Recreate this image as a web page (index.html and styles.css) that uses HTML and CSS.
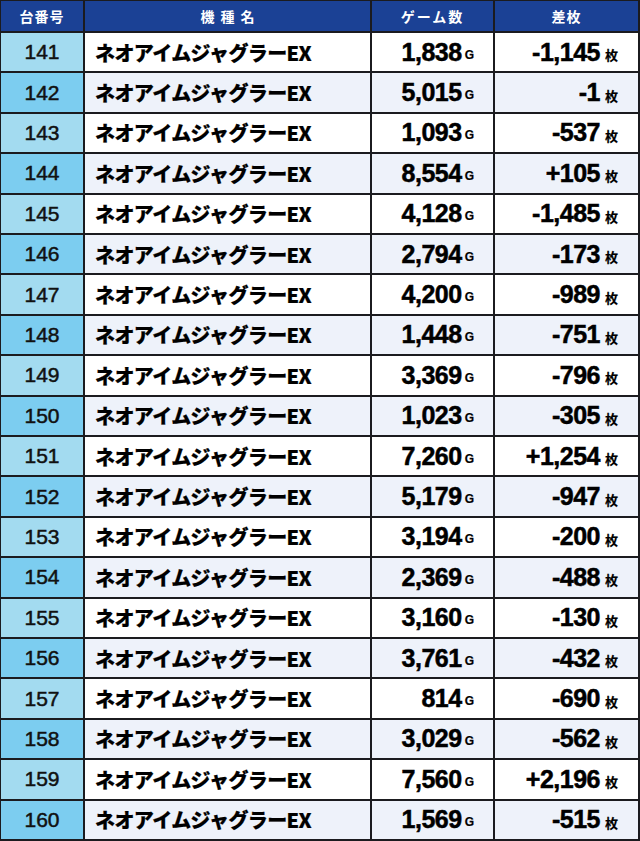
FILE: index.html
```html
<!DOCTYPE html>
<html lang="ja">
<head>
<meta charset="utf-8">
<title>台番号一覧</title>
<link rel="stylesheet" href="styles.css">
</head>
<body>
<div class="table">
  <div class="th">台番号</div>
  <div class="th th-wide">機種名</div>
  <div class="th th-mid">ゲーム数</div>
  <div class="th">差枚</div>

  <div class="no odd">141</div><div class="name odd">ネオアイムジャグラーEX</div><div class="games odd">1,838<span class="u">G</span></div><div class="diff odd">-1,145<span class="m">枚</span></div>
  <div class="no even">142</div><div class="name even">ネオアイムジャグラーEX</div><div class="games even">5,015<span class="u">G</span></div><div class="diff even">-1<span class="m">枚</span></div>
  <div class="no odd">143</div><div class="name odd">ネオアイムジャグラーEX</div><div class="games odd">1,093<span class="u">G</span></div><div class="diff odd">-537<span class="m">枚</span></div>
  <div class="no even">144</div><div class="name even">ネオアイムジャグラーEX</div><div class="games even">8,554<span class="u">G</span></div><div class="diff even">+105<span class="m">枚</span></div>
  <div class="no odd">145</div><div class="name odd">ネオアイムジャグラーEX</div><div class="games odd">4,128<span class="u">G</span></div><div class="diff odd">-1,485<span class="m">枚</span></div>
  <div class="no even">146</div><div class="name even">ネオアイムジャグラーEX</div><div class="games even">2,794<span class="u">G</span></div><div class="diff even">-173<span class="m">枚</span></div>
  <div class="no odd">147</div><div class="name odd">ネオアイムジャグラーEX</div><div class="games odd">4,200<span class="u">G</span></div><div class="diff odd">-989<span class="m">枚</span></div>
  <div class="no even">148</div><div class="name even">ネオアイムジャグラーEX</div><div class="games even">1,448<span class="u">G</span></div><div class="diff even">-751<span class="m">枚</span></div>
  <div class="no odd">149</div><div class="name odd">ネオアイムジャグラーEX</div><div class="games odd">3,369<span class="u">G</span></div><div class="diff odd">-796<span class="m">枚</span></div>
  <div class="no even">150</div><div class="name even">ネオアイムジャグラーEX</div><div class="games even">1,023<span class="u">G</span></div><div class="diff even">-305<span class="m">枚</span></div>
  <div class="no odd">151</div><div class="name odd">ネオアイムジャグラーEX</div><div class="games odd">7,260<span class="u">G</span></div><div class="diff odd">+1,254<span class="m">枚</span></div>
  <div class="no even">152</div><div class="name even">ネオアイムジャグラーEX</div><div class="games even">5,179<span class="u">G</span></div><div class="diff even">-947<span class="m">枚</span></div>
  <div class="no odd">153</div><div class="name odd">ネオアイムジャグラーEX</div><div class="games odd">3,194<span class="u">G</span></div><div class="diff odd">-200<span class="m">枚</span></div>
  <div class="no even">154</div><div class="name even">ネオアイムジャグラーEX</div><div class="games even">2,369<span class="u">G</span></div><div class="diff even">-488<span class="m">枚</span></div>
  <div class="no odd">155</div><div class="name odd">ネオアイムジャグラーEX</div><div class="games odd">3,160<span class="u">G</span></div><div class="diff odd">-130<span class="m">枚</span></div>
  <div class="no even">156</div><div class="name even">ネオアイムジャグラーEX</div><div class="games even">3,761<span class="u">G</span></div><div class="diff even">-432<span class="m">枚</span></div>
  <div class="no odd">157</div><div class="name odd">ネオアイムジャグラーEX</div><div class="games odd">814<span class="u">G</span></div><div class="diff odd">-690<span class="m">枚</span></div>
  <div class="no even">158</div><div class="name even">ネオアイムジャグラーEX</div><div class="games even">3,029<span class="u">G</span></div><div class="diff even">-562<span class="m">枚</span></div>
  <div class="no odd">159</div><div class="name odd">ネオアイムジャグラーEX</div><div class="games odd">7,560<span class="u">G</span></div><div class="diff odd">+2,196<span class="m">枚</span></div>
  <div class="no even">160</div><div class="name even">ネオアイムジャグラーEX</div><div class="games even">1,569<span class="u">G</span></div><div class="diff even">-515<span class="m">枚</span></div>
</div>
</body>
</html>
```

FILE: styles.css
```css
html, body {
  margin: 0;
  padding: 0;
  background: #ffffff;
}

.table {
  box-sizing: border-box;
  width: 640px;
  height: 841px;
  display: grid;
  grid-template-columns: 82px 285px 121px 143px;
  grid-template-rows: 30px repeat(20, 1fr);
  gap: 2px;
  padding: 1px 2px 2px 1px;
  background: #1b1b1f;
}

.th {
  background: #1b4195;
  color: #ffffff;
  font-family: "Noto Sans CJK JP", "Noto Sans", sans-serif;
  font-weight: 700;
  font-size: 14px;
  display: flex;
  align-items: center;
  justify-content: center;
  letter-spacing: 1px;
}

.th-wide {
  letter-spacing: 6px;
  padding-left: 6px;
}

.th-mid {
  letter-spacing: 2px;
}

.no {
  display: flex;
  align-items: center;
  justify-content: center;
  font-family: "Liberation Sans", Arial, sans-serif;
  font-size: 21px;
  color: #111111;
  -webkit-text-stroke: 0.5px #111111;
}

.no.odd {
  background: #a3dbf0;
}

.no.even {
  background: #7ccdf0;
}

.name {
  display: flex;
  align-items: center;
  padding-left: 10px;
  font-family: "Noto Sans CJK JP", sans-serif;
  font-weight: 900;
  font-size: 20px;
  letter-spacing: -0.6px;
  color: #000000;
  -webkit-text-stroke: 0.2px #000000;
}

.odd.name, .odd.games, .odd.diff {
  background: #ffffff;
}

.even.name, .even.games, .even.diff {
  background: #eef2fa;
}

.games, .diff {
  display: flex;
  align-items: center;
  justify-content: flex-end;
  font-family: "Liberation Sans", Arial, sans-serif;
  font-weight: 700;
  font-size: 25px;
  letter-spacing: -0.5px;
  color: #000000;
  -webkit-text-stroke: 0.5px #000000;
}

.games {
  padding-right: 19px;
}

.diff {
  padding-right: 20px;
}

.u {
  font-size: 12px;
  letter-spacing: 0;
  margin-left: 3px;
  margin-top: 5px;
  -webkit-text-stroke: 0.2px #000000;
}

.m {
  font-family: "Noto Sans CJK JP", sans-serif;
  font-size: 13px;
  letter-spacing: 0;
  margin-left: 5px;
  margin-top: 5px;
  -webkit-text-stroke: 0.2px #000000;
}
```
